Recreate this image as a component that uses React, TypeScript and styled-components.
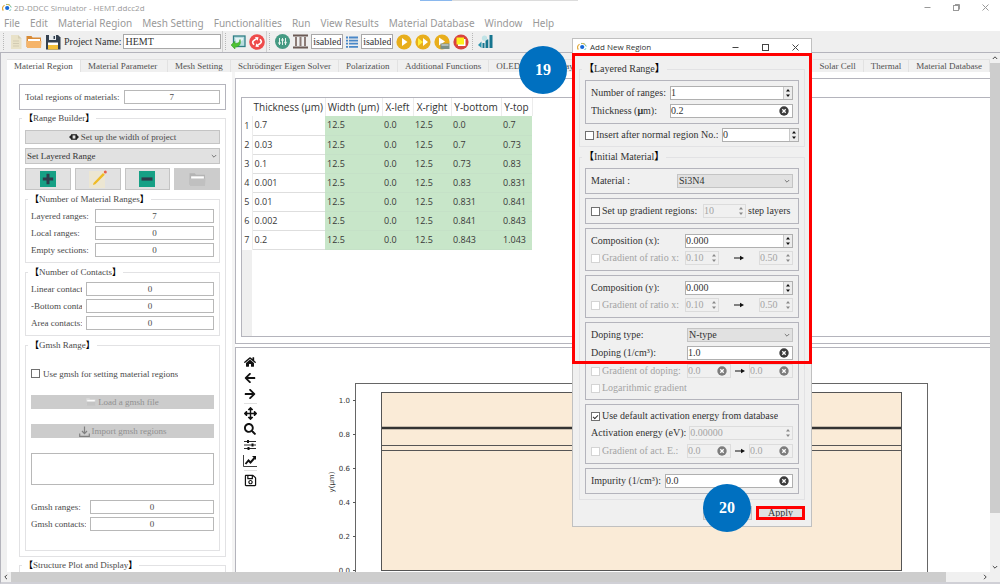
import React from "react";
import styled, { createGlobalStyle, css } from "styled-components";
import { FaHome, FaArrowLeft, FaArrowRight, FaArrowsAlt, FaSearch, FaRegSave } from "react-icons/fa";

const serif = `"Liberation Serif", "Noto Sans CJK TC", serif`;
const sans = `"Open Sans", "Noto Sans", sans-serif`;
const line = "#b4b4bc";
const face = "#f0f0f0";

const GlobalStyle = createGlobalStyle`
  *, *::before, *::after { box-sizing: border-box; }
  body { margin: 0; overflow: hidden; }
  button, input, select, textarea { font: inherit; color: inherit; margin: 0; padding: 0; border-radius: 0; outline: none; }
  svg { display: block; flex: none; }
`;

/* ---------- window shell ---------- */

const Window = styled.div`
  position: relative;
  display: flex;
  flex-direction: column;
  height: 100vh;
  background: #fff;
  font-family: ${serif};
  font-size: 9px;
  line-height: 12px;
  color: #4a4a4a;
`;

const TitleBar = styled.header`
  display: flex;
  align-items: center;
  gap: 2px;
  height: 15px;
  padding: 0 10px 0 2px;
  font-family: ${sans};
  font-size: 8px;
  color: #999;
`;

const TitleText = styled.h1`
  flex: 1;
  margin: 0;
  font-size: inherit;
  font-weight: 400;
`;

const WindowButtons = styled.div<{ $dark?: boolean }>`
  display: flex;
  gap: ${(p) => (p.$dark ? 21 : 20)}px;
  color: ${(p) => (p.$dark ? "#444" : "#999")};
`;

const PlainButton = styled.button`
  display: flex;
  align-items: center;
  justify-content: center;
  background: none;
  border: 0;
`;

const TopStrip = styled.div`
  position: absolute;
  top: 0;
  left: 42%;
  width: 158px;
  height: 1px;
  background: linear-gradient(90deg, #8ab8ee 32px, #dcdcdc 32px);
`;

const MenuBar = styled.nav`
  display: flex;
  gap: 10px;
  height: 16px;
  padding: 0 4px;
  font-family: "Noto Sans", sans-serif;
  font-size: 10px;
  line-height: 16px;
  color: #999;
`;

const MenuItem = styled(PlainButton)`
  white-space: nowrap;
`;

const Toolbar = styled.div`
  display: flex;
  align-items: center;
  height: 22px;
  padding: 0 3px;
  gap: 2px;
  background: #efefef;
  border-bottom: 1px solid ${line};
  font-size: 10px;
  color: #333;
`;

const ToolGroup = styled.div<{ $divided?: boolean }>`
  display: flex;
  align-items: center;
  gap: 3px;
  height: 21px;
  padding-right: 1px;
  ${(p) => p.$divided && css`border-right: 1px solid #d0d0d0;`}
`;

const Grip = styled.span`
  width: 2px;
  height: 17px;
  margin-right: 1px;
  border-left: 1px dotted #b8b8b8;
`;

const ToolInput = styled.input<{ $width: number }>`
  width: ${(p) => p.$width}px;
  height: 15px;
  padding: 0 1px;
  background: #fff;
  border: 1px solid #a8a8a8;
`;

const ToolLabel = styled.label`
  display: flex;
  align-items: center;
  gap: 2px;
  white-space: nowrap;
`;

/* ---------- work area ---------- */

const Work = styled.div`
  flex: 1;
  display: flex;
  min-height: 0;
  background: ${face};
  border-left: 1px solid ${line};
`;

const WorkMain = styled.main`
  flex: 1;
  min-width: 0;
  display: flex;
  flex-direction: column;
  padding: 6px 0 0 6px;
`;

const TabStrip = styled.div`
  display: flex;
  height: 13px;
  color: #505050;
`;

const Tab = styled.button<{ $active?: boolean; $min?: number; $push?: boolean }>`
  flex: none;
  height: 13px;
  min-width: ${(p) => p.$min ?? 0}px;
  padding: 0 7px;
  text-align: left;
  line-height: 12px;
  white-space: nowrap;
  background: ${(p) => (p.$active ? "#fff" : face)};
  border: 0;
  border-top: 1px solid #e2e2e2;
  border-right: 1px solid #e2e2e2;
  margin-left: ${(p) => (p.$push ? "auto" : "0")};
`;

const Pane = styled.div`
  flex: 1;
  display: flex;
  min-height: 0;
  background: #fff;
`;

const Sidebar = styled.aside`
  flex: none;
  width: 225px;
  display: flex;
  flex-direction: column;
  gap: 3px;
  padding: 12px 6px 0 12px;
  overflow: hidden;
`;

const Splitter = styled.div`
  flex: none;
  width: 3px;
  background: #f4f4f4;
`;

const Frame = styled.div<{ $gap?: number }>`
  flex: none;
  display: flex;
  flex-direction: column;
  gap: ${(p) => p.$gap ?? 3}px;
  padding: 5px;
  border: 1px solid ${line};
`;

const Group = styled.fieldset<{ $pad?: string; $gap?: number }>`
  flex: none;
  display: flex;
  flex-direction: column;
  gap: ${(p) => p.$gap ?? 4}px;
  min-width: 0;
  margin: 0;
  padding: ${(p) => p.$pad ?? "5px"};
  border: 1px solid #e2e2e4;
`;

const Legend = styled.legend`
  height: 10px;
  padding: 0 2px;
  line-height: 10px;
  white-space: nowrap;
  margin-left: -3px;
`;

const Bracket = styled.b`
  color: #000;
`;

const Row = styled.div<{ $gap?: number; $height?: number }>`
  display: flex;
  align-items: center;
  gap: ${(p) => p.$gap ?? 3}px;
  height: ${(p) => p.$height ?? 14}px;
`;

const RowLabel = styled.label<{ $width?: number; $dim?: boolean }>`
  flex: none;
  width: ${(p) => (p.$width ? `${p.$width}px` : "auto")};
  overflow: hidden;
  white-space: nowrap;
  color: ${(p) => (p.$dim ? "#a4a4a4" : "inherit")};
`;

const CountInput = styled.input`
  flex: 1;
  min-width: 0;
  height: 14px;
  text-align: center;
  background: #fff;
  border: 1px solid #b8b8b8;
`;

const Push = styled.button<{ $height?: number }>`
  display: flex;
  align-items: center;
  justify-content: center;
  gap: 2px;
  flex: 1 0 auto;
  height: ${(p) => p.$height ?? 14}px;
  line-height: 12px;
  background: #e1e1e1;
  border: 1px solid #c4c4c4;
  &:disabled {
    background: #ccc;
    border-color: #ccc;
    color: #909090;
  }
`;

const ButtonGrid = styled.div`
  display: grid;
  grid-template-columns: repeat(4, 1fr);
  gap: 4px;
`;

const SelectBox = styled.div<{ $width?: number; $height?: number }>`
  display: grid;
  width: ${(p) => (p.$width ? `${p.$width}px` : "100%")};
  height: ${(p) => p.$height ?? 14}px;
  margin-left: auto;
  align-items: center;
  color: #333;
  & > select {
    grid-area: 1 / 1;
    appearance: none;
    width: 100%;
    height: 100%;
    padding: 0 1px;
    background: #e1e1e1;
    border: 1px solid #c4c4c4;
  }
  & > svg {
    grid-area: 1 / 1;
    justify-self: end;
    margin-right: 2px;
    pointer-events: none;
  }
`;

const Check = styled.input`
  appearance: none;
  flex: none;
  display: grid;
  place-content: center;
  width: 9px;
  height: 9px;
  background: #fff;
  border: 1px solid #707070;
  &:disabled { border-color: #d4d4d4; }
  &:checked::after {
    content: "";
    width: 5px;
    height: 3px;
    border: solid #333;
    border-width: 0 0 1px 1px;
    transform: rotate(-45deg);
  }
`;

const LogBox = styled.textarea`
  display: block;
  height: 32px;
  resize: none;
  border: 1px solid #b8b8b8;
`;

const Stack = styled.div`
  display: flex;
  flex-direction: column;
  gap: 3px;
`;

/* ---------- right side ---------- */

const Right = styled.section`
  flex: 1;
  min-width: 0;
  display: flex;
  flex-direction: column;
  padding-top: 6px;
`;

const TablePanel = styled.div`
  flex: none;
  height: 266px;
  padding: 18px 0 6px 5px;
  border: 1px solid ${line};
  border-right: 0;
`;

const TableFrame = styled.div`
  height: 240px;
  display: flex;
  flex-direction: column;
  border: 1px solid ${line};
  border-right: 0;
`;

const HeaderFill = styled.div`
  flex: 1;
  width: 10px;
  background: #efefef;
`;

const DataTable = styled.table`
  table-layout: fixed;
  width: 290px;
  border-collapse: collapse;
  font-family: ${sans};
  font-size: 9px;
  color: #383838;
  th, td { padding: 0; font-weight: 400; text-align: left; white-space: nowrap; }
  thead th { height: 18px; text-align: center; font-size: 10px; color: #333; border-right: 1px solid #ececec; }
  thead th:first-child { border-right: 0; }
  tbody th { text-align: center; border-right: 1px solid #ececec; }
  tbody td { height: 19px; padding-left: 2px; border-bottom: 1px solid #dedede; }
  tbody td:nth-child(n + 3) { background: #c8e6c9; border-bottom-color: #c5e1c7; }
`;

const PlotPanel = styled.div`
  flex: 1;
  display: flex;
  min-height: 0;
  margin-top: 3px;
  border: 1px solid ${line};
  border-right: 0;
  border-bottom: 0;
  overflow: hidden;
`;

const PlotTools = styled.div`
  flex: none;
  width: 28px;
  display: flex;
  flex-direction: column;
  align-items: center;
  padding-top: 6px;
  color: #111;
`;

const PlotTool = styled(PlainButton)`
  flex: none;
  width: 14px;
  height: 16px;
`;

const ToolRule = styled.hr`
  width: 13px;
  margin: 1px 0;
  border: 0;
  border-top: 1px solid #e0e0e0;
`;

const Chart = styled.svg`
  flex: 1;
  min-width: 0;
  align-self: flex-start;
  font-family: "DejaVu Sans", sans-serif;
  font-size: 7px;
`;

/* ---------- scroll bars ---------- */

const VBar = styled.div`
  flex: none;
  width: 10px;
  display: flex;
  flex-direction: column;
  align-items: center;
  background: ${face};
`;

const HBar = styled.footer`
  flex: none;
  display: flex;
  align-items: center;
  height: 12px;
  background: ${face};
  border-left: 1px solid ${line};
  border-bottom: 2px solid #d0d0d6;
`;

const BarButton = styled(PlainButton)`
  flex: none;
  width: 10px;
  height: 10px;
`;

const Thumb = styled.div<{ $grow: number }>`
  flex: ${(p) => p.$grow};
  align-self: stretch;
  background: #cdcdcd;
`;

const Track = styled.div<{ $grow: number }>`
  flex: ${(p) => p.$grow};
`;

/* ---------- dialog ---------- */

const DialogLayer = styled.div`
  position: absolute;
  top: 38px;
  left: 572px;
  width: 240px;
  color: #333;
  font-size: 10px;
`;

const DialogBox = styled.section`
  background: ${face};
  border: 1px solid #c0c0c0;
`;

const DialogTitle = styled.header`
  display: flex;
  align-items: center;
  gap: 3px;
  height: 16px;
  padding: 0 11px 0 4px;
  background: #fff;
  font-family: ${sans};
  font-size: 8px;
`;

const DialogBody = styled.form`
  display: flex;
  flex-direction: column;
  gap: 5px;
  padding: 9px 6px 6px;
`;

const Field = styled.div<{ $width?: number; $off?: boolean }>`
  display: flex;
  align-items: center;
  flex: ${(p) => (p.$width ? "none" : "1")};
  width: ${(p) => (p.$width ? `${p.$width}px` : "auto")};
  min-width: 0;
  height: 14px;
  margin-left: auto;
  background: ${(p) => (p.$off ? face : "#fff")};
  border: 1px solid ${(p) => (p.$off ? "#dcdcdc" : "#b0b0b0")};
  color: ${(p) => (p.$off ? "#a4a4a4" : "#333")};
  & > input {
    flex: 1;
    min-width: 0;
    height: 12px;
    background: transparent;
    border: 0;
  }
`;

/* the second field of a "from → to" pair keeps its place beside the arrow */
const Pair = styled.div<{ $space: number }>`
  display: grid;
  grid-template-columns: auto ${(p) => p.$space}px auto;
  align-items: center;
  margin-left: auto;
`;

const SpinButtons = styled.span<{ $off?: boolean }>`
  flex: none;
  display: grid;
  place-items: center;
  width: 9px;
  height: 12px;
  background: ${(p) => (p.$off ? "transparent" : "#ececec")};
  border-left: 1px solid ${(p) => (p.$off ? "transparent" : "#c8c8c8")};
  color: ${(p) => (p.$off ? "#888" : "#111")};
`;

const ClearButton = styled(PlainButton)`
  flex: none;
  width: 17px;
  height: 12px;
`;

const Between = styled.span`
  display: grid;
  place-items: center;
  color: #111;
`;

const DialogFooter = styled.div`
  display: flex;
  justify-content: flex-end;
  gap: 4px;
  padding-top: 1px;
`;

const DialogButton = styled(Push)<{ $marked?: boolean }>`
  flex: none;
  width: 49px;
  overflow: hidden;
  ${(p) => p.$marked && css`border: 3px solid #f00;`}
`;

const RedFrame = styled.div`
  position: absolute;
  top: 15px;
  left: 0;
  width: 240px;
  height: 311px;
  border: 3px solid #f00;
  pointer-events: none;
`;

const StepBadge = styled.div<{ $x: number; $y: number }>`
  position: absolute;
  left: ${(p) => p.$x}px;
  top: ${(p) => p.$y}px;
  display: grid;
  place-items: center;
  width: 48px;
  height: 48px;
  border-radius: 50%;
  background: #0070c0;
  color: #fff;
  font-size: 16px;
  font-weight: 700;
`;

/* ---------- drawings ---------- */

const AppIcon = () => (
  <svg width="10" height="10" viewBox="0 0 10 10" fill="none">
    <path d="M1.4 7.5A4.2 3.6 0 0 1 2.6 2.2" stroke="#e3a93a" strokeWidth="1.2" />
    <path d="M4 1.6A4.4 4 0 0 1 9.2 4.5M8.8 6.4L7.6 8" stroke="#55c0b0" strokeWidth="1" />
    <path d="M4.6 1.4A4 3.6 0 0 1 8.4 3" stroke="#e3b84a" strokeWidth="1" />
    <circle cx="5.2" cy="5" r="2.1" fill="#1568d8" />
  </svg>
);

const Minimise = () => (
  <svg width="9" height="9" viewBox="0 0 9 9" stroke="currentColor"><path d="M1.500 4.500h6" /></svg>
);
const Maximise = () => (
  <svg width="9" height="9" viewBox="0 0 9 9" stroke="currentColor" fill="none"><rect x="1.5" y="1.5" width="6" height="6" /></svg>
);
const Restore = () => (
  <svg width="9" height="9" viewBox="0 0 9 9" stroke="currentColor" fill="none">
    <rect x="1.5" y="2.5" width="5" height="5" /><path d="M3 1.5h4.500v5" />
  </svg>
);
const Close = () => (
  <svg width="9" height="9" viewBox="0 0 9 9" stroke="currentColor"><path d="M1.500 1.500l6 6M7.500 1.500l-6 6" /></svg>
);

const Chevron = ({ turn = 0, color = "#777" }: { turn?: number; color?: string }) => (
  <svg width="8" height="8" viewBox="0 0 8 8" fill="none" stroke={color} strokeWidth="1">
    <path d="M1.8 3L4 5.200L6.200 3" transform={`rotate(${turn} 4 4)`} />
  </svg>
);

const PageIcon = () => (
  <svg width="14" height="16" viewBox="0 0 14 16">
    <path d="M2 1h7l3.500 3.500V15H2z" fill="#e9e2c8" /><path d="M9 1v3.500h3.500z" fill="#d6cfb4" />
    <path d="M4 7h6M4 9.500h6M4 12h6" stroke="#d2cbb2" />
  </svg>
);
const FolderIcon = ({ w = 16, back = "#d88a35", front = "#f5b46a" }: { w?: number; back?: string; front?: string }) => (
  <svg width={w} height={w} viewBox="0 0 16 16">
    <path d="M.5 2h5l1 1.500h8.500V13H.5z" fill={back} /><path d="M2 5h12v3H2z" fill="#fff" /><path d="M.5 7h15L15 14H1z" fill={front} />
  </svg>
);
const DiskIcon = () => (
  <svg width="16" height="16" viewBox="0 0 16 16">
    <path d="M1 1h12l2.500 2.500V15.500H1z" fill="#33404f" /><rect x="4" y="1" width="7" height="5" fill="#e9edf0" />
    <rect x="8.500" y="2" width="1.500" height="3" fill="#33404f" /><rect x="3" y="8.500" width="10" height="3" fill="#fff" /><rect x="3" y="11" width="10" height="4.500" fill="#f3bf3a" />
  </svg>
);
const ImageIcon = () => (
  <svg width="15" height="15" viewBox="0 0 15 15">
    <rect x="2.500" y="2" width="11.500" height="10.500" fill="#b9dde0" stroke="#2f7f86" strokeWidth="1.300" />
    <path d="M4 4h8v2L6 10z" fill="#e4f3f4" />
    <path d="M0 11l4-3.700v2.200c3 0 4.500-1 5-4c1.400 4.600-1 7.600-5 7.600v2z" fill="#4fc234" stroke="#2f9a22" strokeWidth=".5" />
  </svg>
);
const RefreshIcon = () => (
  <svg width="16" height="16" viewBox="0 0 16 16" fill="none">
    <circle cx="8" cy="8" r="7.800" fill="#ee4b4b" />
    <g transform="rotate(-35 8 8)">
      <path d="M4 8.500V7a2 2 0 0 1 2-2h4M12 7.500V9a2 2 0 0 1-2 2H6" stroke="#fff" strokeWidth="1.600" />
      <path d="M9.200 2.600L12 5L9.200 7.400zM6.800 8.600L4 11L6.800 13.400z" fill="#fff" />
    </g>
  </svg>
);
const TuneIcon = () => (
  <svg width="15" height="15" viewBox="0 0 15 15" stroke="#e8f4ee">
    <circle cx="7.500" cy="7.500" r="7.500" fill="#459a83" stroke="none" />
    <path d="M4.500 4v7M7.500 4v7M10.500 4v7" /><path d="M3.300 9h2.400M6.300 6h2.400M9.300 8.500h2.400" strokeWidth="1.600" />
  </svg>
);
const PillarsIcon = () => (
  <svg width="15" height="15" viewBox="0 0 15 15" fill="#6b5a55">
    <path d="M0 .5h15V2.500H0zM0 12.500h15V14.500H0z" />
    <path d="M2 3h2v9H2zM6.500 3h2v9h-2zM11 3h2v9h-2z" fill="#8c7b76" />
  </svg>
);
const ListIcon = () => (
  <svg width="12" height="12" viewBox="0 0 12 12" stroke="#4a88c8" strokeWidth="1.800"><path d="M0 1.500h2M3 1.500h9M0 4.600h2M3 4.600h9M0 7.700h2M3 7.700h9M0 10.800h2M3 10.800h9" /></svg>
);
const Disc = ({ children, color = "#e8ae1c" }: { children: React.ReactNode; color?: string }) => (
  <svg width="16" height="16" viewBox="0 0 16 16"><circle cx="8" cy="8" r="7.600" fill={color} />{children}</svg>
);
const BarsIcon = () => (
  <svg width="15" height="14" viewBox="0 0 15 14" fill="#16758f">
    <path d="M11.500 0h3v13h-3zM7.500 4.500h2.800V13H7.500zM4.500 8h2v5h-2z" /><path d="M0 10l3.500-3.500v6.500z" fill="#2a93ad" /><circle cx="6.500" cy="3.200" r="2.600" fill="#bfe3e6" />
  </svg>
);
const WidthIcon = () => (
  <svg width="10" height="8" viewBox="0 0 10 8" fill="none" stroke="#222">
    <rect x="3" y="1.800" width="4" height="4.400" strokeWidth="1.200" /><path d="M3 1L0 4l3 3zM7 1l3 3l-3 3z" fill="#222" stroke="none" />
  </svg>
);
const PlusIcon = () => (
  <svg width="16" height="16" viewBox="0 0 16 16"><rect width="16" height="16" fill="#16a085" /><path d="M8 2.800v10.400M2.800 8h10.400" stroke="#2f3b4a" strokeWidth="3" /></svg>
);
const MinusIcon = () => (
  <svg width="16" height="16" viewBox="0 0 16 16"><rect width="16" height="16" fill="#16a085" /><path d="M2.500 8h11" stroke="#2f3b4a" strokeWidth="3.200" /></svg>
);
const PencilIcon = () => (
  <svg width="18" height="18" viewBox="0 0 18 18">
    <rect x="0" y="1" width="16" height="17" fill="#ece6d2" /><path d="M4.500 13L14 3l1.800 1.700L6.300 14.300L4 15z" fill="#efbb25" /><circle cx="16.300" cy="2" r="1.500" fill="#e8604a" />
  </svg>
);
const ImportIcon = () => (
  <svg width="11" height="11" viewBox="0 0 11 11" fill="none" stroke="#808080" strokeWidth="1.200"><path d="M5.500 .5v7M3 5l2.500 2.700L8 5M.7 7.500v2.800h9.600V7.500" /></svg>
);
const SlidersIcon = () => (
  <svg width="12" height="12" viewBox="0 0 12 12" stroke="#111"><path d="M0 2.500h12M0 6h12M0 9.500h12" strokeWidth=".9" /><path d="M4 1v3M8.500 4.500v3M4.500 8v3" strokeWidth="2" /></svg>
);
const LineChartIcon = () => (
  <svg width="14" height="12" viewBox="0 0 14 12" fill="none" stroke="#111"><path d="M.5 0v11.500H14" strokeWidth=".8" /><path d="M2.500 9L5.500 5.500L7.500 7.500L11.500 3" strokeWidth="1.900" /><path d="M9 1h4v4z" fill="#111" stroke="none" /></svg>
);
const ArrowIcon = () => (
  <svg width="10" height="6" viewBox="0 0 10 6"><path d="M0 3h7" stroke="currentColor" /><path d="M6 .8L10 3L6 5.200z" fill="currentColor" /></svg>
);
const SpinIcon = () => (
  <svg width="6" height="10" viewBox="0 0 6 10" fill="currentColor"><path d="M1 3.500L3 1L5 3.500zM1 6.500L3 9L5 6.500z" /></svg>
);
const ClearIcon = ({ off }: { off?: boolean }) => (
  <svg width="10" height="10" viewBox="0 0 10 10"><circle cx="5" cy="5" r="4.700" fill={off ? "#7c7c7c" : "#3c3c3c"} /><path d="M3.300 3.300l3.400 3.400M6.700 3.300L3.300 6.700" stroke="#fff" strokeWidth="1.300" /></svg>
);

/* ---------- pieces ---------- */

const Heading = ({ children }: { children: React.ReactNode }) => (
  <Legend><Bracket>【</Bracket>{children}<Bracket>】</Bracket></Legend>
);

const Count = ({ id, label, value, width }: { id: string; label: string; value: string; width?: number }) => (
  <Row $gap={4}>
    <RowLabel htmlFor={id} $width={width}>{label}</RowLabel>
    <CountInput id={id} defaultValue={value} />
  </Row>
);

type FieldProps = { id: string; value: string; width?: number; off?: boolean; label?: string };

const Spin = ({ id, value, width, off, label }: FieldProps) => (
  <Field $width={width} $off={off}>
    <input id={id} defaultValue={value} disabled={off} aria-label={label} />
    <SpinButtons $off={off}><SpinIcon /></SpinButtons>
  </Field>
);

const Clearable = ({ id, value, width, off, label }: FieldProps) => (
  <Field $width={width} $off={off}>
    <input id={id} defaultValue={value} disabled={off} aria-label={label} />
    <ClearButton type="button" aria-label="Clear"><ClearIcon off={off} /></ClearButton>
  </Field>
);

const Ticked = ({ id, label, off, checked }: { id: string; label: string; off?: boolean; checked?: boolean }) => (
  <>
    <Check type="checkbox" id={id} disabled={off} defaultChecked={checked} />
    <RowLabel htmlFor={id} $dim={off}>{label}</RowLabel>
  </>
);

const ClearPair = ({ name, label }: { name: string; label: string }) => (
  <Pair $space={18}>
    <Clearable id={`${name}-from`} value="0.0" width={44} off label={`${label} from`} />
    <Between><ArrowIcon /></Between>
    <Clearable id={`${name}-to`} value="0.0" width={44} off label={`${label} to`} />
  </Pair>
);

const Composition = ({ axis }: { axis: string }) => (
  <Frame>
    <Row>
      <RowLabel htmlFor={`comp-${axis}`}>Composition ({axis}):</RowLabel>
      <Spin id={`comp-${axis}`} value="0.000" width={108} />
    </Row>
    <Row $gap={2}>
      <Ticked id={`ratio-${axis}`} label="Gradient of ratio x:" off />
      <Pair $space={40}>
        <Spin id={`from-${axis}`} value="0.10" width={34} off label="Ratio from" />
        <Between><ArrowIcon /></Between>
        <Spin id={`to-${axis}`} value="0.50" width={34} off label="Ratio to" />
      </Pair>
    </Row>
  </Frame>
);

const menus = ["File", "Edit", "Material Region", "Mesh Setting", "Functionalities", "Run", "View Results", "Material Database", "Window", "Help"];
const headers = ["Thickness (μm)", "Width (μm)", "X-left", "X-right", "Y-bottom", "Y-top"];
const widths = [10, 73, 57, 31, 38, 50, 31];
const rows = [
  ["0.7", "12.5", "0.0", "12.5", "0.0", "0.7"],
  ["0.03", "12.5", "0.0", "12.5", "0.7", "0.73"],
  ["0.1", "12.5", "0.0", "12.5", "0.73", "0.83"],
  ["0.001", "12.5", "0.0", "12.5", "0.83", "0.831"],
  ["0.01", "12.5", "0.0", "12.5", "0.831", "0.841"],
  ["0.002", "12.5", "0.0", "12.5", "0.841", "0.843"],
  ["0.2", "12.5", "0.0", "12.5", "0.843", "1.043"],
];
const ticks = ["1.0", "0.8", "0.6", "0.4", "0.2", "0.0"];

const AddRegionDialog = () => (
  <DialogLayer>
    <DialogBox role="dialog" aria-label="Add New Region">
      <DialogTitle>
        <AppIcon />
        <TitleText as="h2">Add New Region</TitleText>
        <WindowButtons $dark>
          <PlainButton aria-label="Minimise"><Minimise /></PlainButton>
          <PlainButton aria-label="Maximise"><Maximise /></PlainButton>
          <PlainButton aria-label="Close"><Close /></PlainButton>
        </WindowButtons>
      </DialogTitle>
      <DialogBody onSubmit={(e) => e.preventDefault()}>
        <Group $pad="6px 5px 4px">
          <Heading>Layered Range</Heading>
          <Frame $gap={4}>
            <Row>
              <RowLabel htmlFor="ranges">Number of ranges:</RowLabel>
              <Spin id="ranges" value="1" width={123} />
            </Row>
            <Row>
              <RowLabel htmlFor="thick">Thickness (<b>μ</b>m):</RowLabel>
              <Clearable id="thick" value="0.2" width={123} />
            </Row>
          </Frame>
          <Row $gap={2}>
            <Ticked id="insert" label="Insert after normal region No.:" />
            <Spin id="region" value="0" width={77} label="Region number" />
          </Row>
        </Group>
        <Group $pad="6px 5px 5px">
          <Heading>Initial Material</Heading>
          <Frame>
            <Row>
              <RowLabel htmlFor="material">Material :</RowLabel>
              <SelectBox $width={116}>
                <select id="material"><option>Si3N4</option></select>
                <Chevron />
              </SelectBox>
            </Row>
          </Frame>
          <Frame>
            <Row $gap={2}>
              <Ticked id="steps-on" label="Set up gradient regions:" />
              <Spin id="steps" value="10" width={43} off label="Step layers" />
              <RowLabel htmlFor="steps" $width={45}>step layers</RowLabel>
            </Row>
          </Frame>
          <Composition axis="x" />
          <Composition axis="y" />
          <Frame $gap={4}>
            <Row>
              <RowLabel htmlFor="dtype">Doping type:</RowLabel>
              <SelectBox $width={106}>
                <select id="dtype"><option>N-type</option></select>
                <Chevron />
              </SelectBox>
            </Row>
            <Row>
              <RowLabel htmlFor="doping">Doping (1/cm³):</RowLabel>
              <Clearable id="doping" value="1.0" width={106} />
            </Row>
            <Row $gap={2}>
              <Ticked id="gdop" label="Gradient of doping:" off />
              <ClearPair name="gdop" label="Doping" />
            </Row>
            <Row $gap={2} $height={12}>
              <Ticked id="log" label="Logarithmic gradient" off />
            </Row>
          </Frame>
          <Frame $gap={4}>
            <Row $gap={2} $height={12}>
              <Ticked id="default-act" label="Use default activation energy from database" checked />
            </Row>
            <Row>
              <RowLabel htmlFor="act">Activation energy (eV):</RowLabel>
              <Spin id="act" value="0.00000" width={104} off />
            </Row>
            <Row $gap={2}>
              <Ticked id="gact" label="Gradient of act. E.:" off />
              <ClearPair name="gact" label="Energy" />
            </Row>
          </Frame>
          <Frame>
            <Row>
              <RowLabel htmlFor="impurity">Impurity (1/cm³):</RowLabel>
              <Clearable id="impurity" value="0.0" width={128} />
            </Row>
          </Frame>
        </Group>
        <DialogFooter>
          <DialogButton type="button" aria-label="Cancel" />
          <DialogButton type="submit" $marked>Apply</DialogButton>
        </DialogFooter>
      </DialogBody>
    </DialogBox>
    <RedFrame />
    <StepBadge $x={-53} $y={8}>19</StepBadge>
    <StepBadge $x={131} $y={446}>20</StepBadge>
  </DialogLayer>
);

export default function App() {
  return (
    <>
      <GlobalStyle />
      <Window>
        <TopStrip />
        <TitleBar>
          <AppIcon />
          <TitleText>2D-DDCC Simulator - HEMT.ddcc2d</TitleText>
          <WindowButtons>
            <PlainButton aria-label="Minimise"><Minimise /></PlainButton>
            <PlainButton aria-label="Restore"><Restore /></PlainButton>
            <PlainButton aria-label="Close"><Close /></PlainButton>
          </WindowButtons>
        </TitleBar>
        <MenuBar>
          {menus.map((m) => <MenuItem key={m}>{m}</MenuItem>)}
        </MenuBar>
        <Toolbar>
          <ToolGroup $divided>
            <Grip />
            <PlainButton aria-label="New"><PageIcon /></PlainButton>
            <PlainButton aria-label="Open"><FolderIcon /></PlainButton>
            <PlainButton aria-label="Save"><DiskIcon /></PlainButton>
            <ToolLabel>Project Name:<ToolInput $width={98} defaultValue="HEMT" /></ToolLabel>
          </ToolGroup>
          <ToolGroup $divided>
            <Grip />
            <PlainButton aria-label="Load structure"><ImageIcon /></PlainButton>
            <PlainButton aria-label="Refresh"><RefreshIcon /></PlainButton>
          </ToolGroup>
          <ToolGroup>
            <Grip />
            <PlainButton aria-label="Parameters"><TuneIcon /></PlainButton>
            <PlainButton aria-label="Columns"><PillarsIcon /></PlainButton>
            <ToolInput $width={32} dir="rtl" defaultValue="Disabled" aria-label="Column mode" />
            <PlainButton aria-label="List"><ListIcon /></PlainButton>
            <ToolInput $width={32} dir="rtl" defaultValue="Disabled" aria-label="List mode" />
            <PlainButton aria-label="Run"><Disc><path d="M6 4l5.500 4L6 12z" fill="#fff" /></Disc></PlainButton>
            <PlainButton aria-label="Run all"><Disc><path d="M3 4l5 4l-5 4z" fill="#ffef3a" /><path d="M8 4l5 4l-5 4z" fill="#fff" /></Disc></PlainButton>
            <PlainButton aria-label="Run from folder"><Disc><path d="M5 3.500l6 4l-6 4z" fill="#fff" /><path d="M6.500 9.500h9V15h-9z" fill="#7b8f86" /><path d="M7.500 11h7" stroke="#e8e8e8" /></Disc></PlainButton>
            <PlainButton aria-label="Stop"><Disc color="#d9433f"><rect x="5" y="5" width="7.500" height="7" fill="#fff" /><rect x="3.500" y="3.500" width="7.500" height="7" fill="#fdf01c" /></Disc></PlainButton>
          </ToolGroup>
          <ToolGroup>
            <Grip />
            <PlainButton aria-label="Plot results"><BarsIcon /></PlainButton>
          </ToolGroup>
        </Toolbar>
        <Work>
          <WorkMain>
            <TabStrip role="tablist">
              <Tab role="tab" $active $min={74}>Material Region</Tab>
              <Tab role="tab" $min={87}>Material Parameter</Tab>
              <Tab role="tab" $min={63}>Mesh Setting</Tab>
              <Tab role="tab" $min={107}>Schrödinger Eigen Solver</Tab>
              <Tab role="tab" $min={59}>Polarization</Tab>
              <Tab role="tab" $min={90}>Additional Functions</Tab>
              <Tab role="tab" $min={63}>OLED</Tab>
              <Tab role="tab">Ray</Tab>
              <Tab role="tab" $push>Solar Cell</Tab>
              <Tab role="tab">Thermal</Tab>
              <Tab role="tab">Material Database</Tab>
            </TabStrip>
            <Pane>
              <Sidebar>
                <Frame>
                  <Count id="total" label="Total regions of materials:" value="7" />
                </Frame>
                <Group $pad="7px 5px 5px">
                  <Heading>Range Builder</Heading>
                  <Push><WidthIcon />Set up the width of project</Push>
                  <SelectBox $height={16}>
                    <select aria-label="Range kind"><option>Set Layered Range</option></select>
                    <Chevron />
                  </SelectBox>
                  <ButtonGrid>
                    <Push $height={22} aria-label="Add"><PlusIcon /></Push>
                    <Push $height={22} aria-label="Edit"><PencilIcon /></Push>
                    <Push $height={22} aria-label="Remove"><MinusIcon /></Push>
                    <Push $height={22} aria-label="Open" disabled><FolderIcon w={17} back="#b4b4b4" front="#c0c0c0" /></Push>
                  </ButtonGrid>
                  <Group $gap={3}>
                    <Heading>Number of Material Ranges</Heading>
                    <Count id="layered" label="Layered ranges:" value="7" width={60} />
                    <Count id="local" label="Local ranges:" value="0" width={60} />
                    <Count id="empty" label="Empty sections:" value="0" width={60} />
                  </Group>
                  <Group $gap={3}>
                    <Heading>Number of Contacts</Heading>
                    <Count id="linear" label="Linear contact" value="0" width={51} />
                    <Count id="bottom" label="-Bottom conta" value="0" width={51} />
                    <Count id="area" label="Area contacts:" value="0" width={51} />
                  </Group>
                  <Group $gap={15} $pad="17px 5px 19px">
                    <Heading>Gmsh Range</Heading>
                    <Row $height={13}><Ticked id="gmsh" label="Use gmsh for setting material regions" /></Row>
                    <Push disabled><FolderIcon w={10} back="#dcdcdc" front="#c4c4c4" />Load a gmsh file</Push>
                    <Push disabled><ImportIcon />Import gmsh regions</Push>
                    <LogBox aria-label="Gmsh log" />
                    <Stack>
                      <Count id="granges" label="Gmsh ranges:" value="0" width={55} />
                      <Count id="gcontacts" label="Gmsh contacts:" value="0" width={55} />
                    </Stack>
                  </Group>
                </Group>
                <Group>
                  <Heading>Structure Plot and Display</Heading>
                </Group>
              </Sidebar>
              <Splitter />
              <Right>
                <TablePanel>
                  <TableFrame>
                    <DataTable>
                      <colgroup>{widths.map((w, i) => <col key={i} width={w} />)}</colgroup>
                      <thead>
                        <tr><th />{headers.map((h) => <th key={h} scope="col">{h}</th>)}</tr>
                      </thead>
                      <tbody>
                        {rows.map((r, i) => (
                          <tr key={i}><th scope="row">{i + 1}</th>{r.map((c, j) => <td key={j}>{c}</td>)}</tr>
                        ))}
                      </tbody>
                    </DataTable>
                    <HeaderFill />
                  </TableFrame>
                </TablePanel>
                <PlotPanel>
                  <PlotTools>
                    <PlotTool aria-label="Home"><FaHome size={12} /></PlotTool>
                    <PlotTool aria-label="Back"><FaArrowLeft size={12} /></PlotTool>
                    <PlotTool aria-label="Forward"><FaArrowRight size={12} /></PlotTool>
                    <ToolRule />
                    <PlotTool aria-label="Pan"><FaArrowsAlt size={13} /></PlotTool>
                    <PlotTool aria-label="Zoom"><FaSearch size={12} /></PlotTool>
                    <PlotTool aria-label="Subplots"><SlidersIcon /></PlotTool>
                    <PlotTool aria-label="Axes"><LineChartIcon /></PlotTool>
                    <ToolRule />
                    <PlotTool aria-label="Save figure"><FaRegSave size={13} /></PlotTool>
                  </PlotTools>
                  <Chart viewBox="0 0 726 250" role="img" aria-label="Layer structure">
                    <rect x="91.500" y="35.500" width="572" height="230" fill="none" stroke="#666" />
                    <rect x="117.500" y="44.500" width="520" height="178" fill="#faebd7" stroke="#555" />
                    <path d="M118 97.500h519M118 102.500h519" stroke="#555" />
                    <path d="M118 80h519" stroke="#333" strokeWidth="2.600" />
                    {ticks.map((t, i) => (
                      <g key={t}>
                        <path d={`M89 ${52 + i * 34}.5h2.500`} stroke="#555" />
                        <text x="86" y={55 + i * 34} textAnchor="end" fill="#333">{t}</text>
                      </g>
                    ))}
                    <text x="70" y="134" textAnchor="middle" fill="#333" transform="rotate(-90 70 134)">y(μm)</text>
                  </Chart>
                </PlotPanel>
              </Right>
            </Pane>
          </WorkMain>
          <VBar>
            <BarButton aria-label="Scroll up"><Chevron turn={180} color="#444" /></BarButton>
            <Thumb $grow={450} />
            <Track $grow={49} />
            <BarButton aria-label="Scroll down"><Chevron color="#444" /></BarButton>
          </VBar>
        </Work>
        <HBar>
          <BarButton aria-label="Scroll left"><Chevron turn={90} color="#444" /></BarButton>
          <Thumb $grow={936} />
          <Track $grow={34} />
          <BarButton aria-label="Scroll right"><Chevron turn={-90} color="#444" /></BarButton>
          <BarButton as="span" />
        </HBar>
        <AddRegionDialog />
      </Window>
    </>
  );
}
